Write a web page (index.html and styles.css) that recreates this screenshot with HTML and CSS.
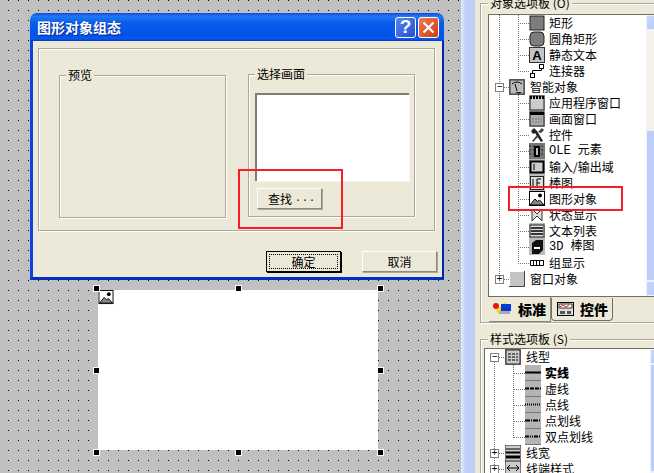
FILE: index.html
```html
<!DOCTYPE html>
<html lang="zh-CN">
<head>
    <meta charset="UTF-8">
    <title>图形对象组态</title>
    <link rel="stylesheet" href="styles.css">
</head>
<body>
<svg class="defs" width="0" height="0">
    <symbol id="i-pic" viewBox="0 0 16 16">
        <rect x="0.5" y="0.5" width="15" height="14" fill="#fff" stroke="#000"/>
        <circle cx="11" cy="4.5" r="2" fill="#000"/>
        <path d="M1 14 L6 8 L8.5 10.5 L10.5 9 L15 14 Z" fill="#888" stroke="#000" stroke-width="1"/>
    </symbol>
    <symbol id="i-line" viewBox="0 0 16 16">
        <rect width="16" height="15" fill="#b4b4b4"/>
        <rect y="15" width="16" height="1" fill="#777"/>
    </symbol>
</svg>

<div class="app">
    <!-- 画面区 -->
    <div class="canvas">
        <div class="dialog">
            <div class="titlebar">
                <span class="title">图形对象组态</span>
                <span class="capbtn help">?</span>
                <span class="capbtn close">
                    <svg width="13" height="13" viewBox="0 0 13 13"><path d="M1.5 1.5 L11.5 11.5 M11.5 1.5 L1.5 11.5" stroke="#fff" stroke-width="2.2"/></svg>
                </span>
            </div>
            <div class="client">
                <div class="group">
                    <div class="fs fs-preview">
                        <span class="fs-label">预览</span>
                    </div>
                    <div class="fs fs-select">
                        <span class="fs-label">选择画面</span>
                        <div class="listbox"></div>
                        <div class="btn btn-find"><span>查找</span><span class="dots">...</span></div>
                    </div>
                </div>
                <div class="footer">
                    <div class="btn btn-ok"><span class="focus">确定</span></div>
                    <div class="btn btn-cancel">取消</div>
                </div>
            </div>
        </div>

        <div class="picture">
            <svg class="pic-icon" width="16" height="15"><use href="#i-pic"/></svg>
        </div>
        <i class="handle h-tl"></i><i class="handle h-tm"></i><i class="handle h-tr"></i>
        <i class="handle h-ml"></i><i class="handle h-mr"></i>
        <i class="handle h-bl"></i><i class="handle h-bm"></i><i class="handle h-br"></i>
    </div>

    <div class="vbar"></div>

    <!-- 选项板 -->
    <div class="panel">
        <div class="pane pane-objects">
            <span class="pane-label">对象选项板 (O)</span>
            <div class="tree tree-objects">
                <div class="tree-body">
                    <div class="branch">
                        <div class="row"><svg class="ico" viewBox="0 0 16 16"><rect x="1" y="1" width="14" height="14" fill="#7d7d7d" stroke="#222"/></svg><span>矩形</span></div>
                        <div class="row"><svg class="ico" viewBox="0 0 16 16"><rect x="1" y="1" width="14" height="14" rx="4" fill="#7d7d7d" stroke="#222"/></svg><span>圆角矩形</span></div>
                        <div class="row"><svg class="ico" viewBox="0 0 16 16"><rect x="0.5" y="0.5" width="15" height="15" fill="#c4c4c4" stroke="#333"/><text x="8" y="13" text-anchor="middle" class="ico-a">A</text></svg><span>静态文本</span></div>
                        <div class="row"><svg class="ico" viewBox="0 0 16 16"><rect x="1.5" y="10.5" width="4" height="4" fill="#fff" stroke="#000"/><rect x="10.5" y="1.5" width="4" height="4" fill="#fff" stroke="#000"/><path d="M3.5 10 V7.5 H12.5 V6" fill="none" stroke="#000"/></svg><span>连接器</span></div>
                    </div>
                    <div class="row parent"><i class="exp">−</i><svg class="ico" viewBox="0 0 16 16"><rect width="16" height="16" fill="#777"/><rect x="1" y="1" width="14" height="14" fill="#bbb" stroke="#333"/><path d="M3 5 Q8 1 13 5 M8 12 L6 5" fill="none" stroke="#000"/><path d="M6 13 H13 L10 15Z" fill="#222"/></svg><span>智能对象</span></div>
                    <div class="branch">
                        <div class="row"><svg class="ico" viewBox="0 0 16 16"><rect width="16" height="16" fill="#bbb"/><rect x="1" y="1" width="14" height="14" fill="#ccc" stroke="#222"/><path d="M1 2.5 H15" stroke="#000" stroke-width="3" stroke-dasharray="2 1"/></svg><span>应用程序窗口</span></div>
                        <div class="row"><svg class="ico" viewBox="0 0 16 16"><rect width="16" height="16" fill="#bbb"/><rect x="1" y="1" width="14" height="14" fill="#aaa" stroke="#222"/><path d="M1 2.5 H15" stroke="#000" stroke-width="3"/><path d="M3 8 H13 M3 11 H13" stroke="#777" stroke-dasharray="2 1"/></svg><span>画面窗口</span></div>
                        <div class="row"><svg class="ico" viewBox="0 0 16 16"><path d="M2 4 L5 1 L8 4 L14 14 L12 15 L6 6 L4 7Z" fill="#222"/><path d="M9 5 L13 1 L15 3 L12 6 M3 14 L8 8 L9 10 L4 15Z" fill="#444"/></svg><span>控件</span></div>
                        <div class="row"><svg class="ico" viewBox="0 0 16 16"><rect width="16" height="16" fill="#777"/><path d="M0 3 H16 M0 7 H16 M0 11 H16" stroke="#222" stroke-dasharray="2 2"/><rect x="5" y="3" width="6" height="11" fill="#000"/><rect x="7" y="5" width="2" height="7" fill="#bbb"/></svg><span class="latin">OLE 元素</span></div>
                        <div class="row"><svg class="ico" viewBox="0 0 16 16"><rect width="16" height="16" fill="#bbb"/><rect x="1.5" y="2.5" width="13" height="11" fill="#ccc" stroke="#000" stroke-width="2"/><path d="M5 5 V11" stroke="#000"/></svg><span>输入/输出域</span></div>
                        <div class="row"><svg class="ico" viewBox="0 0 16 16"><rect width="16" height="16" fill="#bbb"/><rect x="1.5" y="1.5" width="13" height="13" fill="#ddd" stroke="#222"/><path d="M8 4 V12 M8 4 H12 M8 8 H11 M4 4 V12" stroke="#000" fill="none"/></svg><span>棒图</span></div>
                        <div class="row"><svg class="ico"><use href="#i-pic"/></svg><span>图形对象</span></div>
                        <div class="row"><svg class="ico" viewBox="0 0 16 16"><path d="M3 2 L8 7 L13 2 V14 L8 9 L3 14Z" fill="#ddd" stroke="#333"/></svg><span>状态显示</span></div>
                        <div class="row"><svg class="ico" viewBox="0 0 16 16"><rect width="16" height="16" fill="#bbb"/><rect x="1" y="2" width="14" height="12" fill="#ddd" stroke="#222"/><path d="M2 5 H14 M2 8 H14 M2 11 H14" stroke="#000" stroke-width="1.4"/></svg><span>文本列表</span></div>
                        <div class="row"><svg class="ico" viewBox="0 0 16 16"><rect width="16" height="16" fill="#bbb"/><path d="M3 4 L7 1 H14 V11 L10 15 H3Z" fill="#111"/><path d="M5 9 H11" stroke="#fff" stroke-width="2"/></svg><span class="latin">3D 棒图</span></div>
                        <div class="row"><svg class="ico" viewBox="0 0 16 16"><path d="M1.5 5.5 H14.5 V10.5 H1.5Z M4.5 5.5 V10.5 M7.5 5.5 V10.5 M10.5 5.5 V10.5" fill="#fff" stroke="#000"/></svg><span>组显示</span></div>
                    </div>
                    <div class="row parent"><i class="exp">+</i><svg class="ico" viewBox="0 0 16 16"><rect x="0" y="0" width="16" height="16" fill="#c4c4c4"/><path d="M0 15.5 H15.5 V0" fill="none" stroke="#444"/><path d="M0.5 15 V0.5 H15" fill="none" stroke="#fff"/></svg><span>窗口对象</span></div>
                </div>
                <div class="tree-scroll">
                    <div class="sbtn"></div>
                    <div class="strack"></div>
                    <div class="sthumb"></div>
                    <div class="sbtn"></div>
                </div>
            </div>
            <div class="tabs">
                <div class="tab tab-on">
                    <svg width="20" height="16" viewBox="0 0 20 16"><circle cx="4" cy="5" r="3" fill="#f01010"/><path d="M5 11 L14 2" stroke="#f0e000" stroke-width="3"/><rect x="9" y="3" width="10" height="7" fill="#0838d8"/><rect x="7" y="10" width="11" height="3" fill="#aaa"/></svg>
                    <b>标准</b>
                </div>
                <div class="tab">
                    <svg width="17" height="16" viewBox="0 0 17 16"><rect x="0.5" y="1.5" width="16" height="13" fill="#ddd" stroke="#000"/><path d="M2 3 H15 V7 H2Z" fill="#fff" stroke="#333"/><path d="M3 6 L6 4 L9 6 L12 4" fill="none" stroke="#e02020"/><path d="M3 10 H8 V13 H3Z M10 10 H14 V13 H10Z" fill="#555"/></svg>
                    <b>控件</b>
                </div>
            </div>
        </div>

        <div class="pane pane-styles">
            <span class="pane-label">样式选项板 (S)</span>
            <div class="tree tree-styles">
                <div class="tree-body">
                    <div class="row parent"><i class="exp">−</i><svg class="ico" viewBox="0 0 16 16"><rect width="16" height="16" fill="#888"/><rect x="1" y="1" width="14" height="14" fill="#ccc" stroke="#222"/><path d="M3 5 H13 M3 8 H13 M3 11 H13" stroke="#000" stroke-dasharray="3 1"/></svg><span>线型</span></div>
                    <div class="branch">
                        <div class="row"><svg class="ico"><use href="#i-line"/><path d="M0 7.5 H16" stroke="#000" stroke-width="2"/></svg><b>实线</b></div>
                        <div class="row"><svg class="ico"><use href="#i-line"/><path d="M0 7.5 H16" stroke="#000" stroke-width="2" stroke-dasharray="4 1"/></svg><span>虚线</span></div>
                        <div class="row"><svg class="ico"><use href="#i-line"/><path d="M0 7.5 H16" stroke="#000" stroke-width="2" stroke-dasharray="1 1"/></svg><span>点线</span></div>
                        <div class="row"><svg class="ico"><use href="#i-line"/><path d="M0 7.5 H16" stroke="#000" stroke-width="2" stroke-dasharray="5 1 1 1"/></svg><span>点划线</span></div>
                        <div class="row"><svg class="ico"><use href="#i-line"/><path d="M0 7.5 H16" stroke="#000" stroke-width="2" stroke-dasharray="4 1 1 1 1 1"/></svg><span>双点划线</span></div>
                    </div>
                    <div class="row parent"><i class="exp">+</i><svg class="ico" viewBox="0 0 16 16"><rect width="16" height="16" fill="#ccc" stroke="#222"/><path d="M1 4 H15" stroke="#000"/><path d="M1 7.5 H15" stroke="#000" stroke-width="2"/><path d="M1 12 H15" stroke="#000" stroke-width="3"/></svg><span>线宽</span></div>
                    <div class="row parent"><i class="exp">+</i><svg class="ico" viewBox="0 0 16 16"><rect width="16" height="16" fill="#ccc" stroke="#222"/><path d="M2 7 H14 M2 7 L5 4 M2 7 L5 10 M14 7 L11 4 M14 7 L11 10" fill="none" stroke="#000"/></svg><span>线端样式</span></div>
                </div>
                <div class="tree-scroll">
                    <div class="sbtn"></div>
                    <div class="sthumb"></div>
                    <div class="sbtn"></div>
                </div>
            </div>
        </div>
    </div>

    <!-- 红色标注框 -->
    <div class="mark mark-find"></div>
    <div class="mark mark-tree"></div>
</div>
</body>
</html>
```

FILE: styles.css
```css
html, body {
    margin: 0;
    padding: 0;
    overflow: hidden;
}
body {
    font-family: "Noto Sans CJK SC", "Liberation Sans", sans-serif;
    font-size: 12px;
    line-height: 16px;
    color: #000;
    background-color: #c0c0c0;
}
.defs {
    position: absolute;
}
.app {
    position: relative;
    display: flex;
    width: 654px;
    height: 473px;
    overflow: hidden;
}

/* canvas with 10px dot grid */
.canvas {
    position: relative;
    flex: none;
    width: 461px;
    height: 473px;
    background-color: #000;
    background-image:
        linear-gradient(to right, transparent 1px, #c0c0c0 1px),
        linear-gradient(to bottom, transparent 1px, #c0c0c0 1px);
    background-size: 10px 10px;
    background-position: 8px 0;
}
.picture {
    position: absolute;
    left: 98px;
    top: 290px;
    width: 280px;
    height: 160px;
    background-color: #fff;
}
.pic-icon {
    display: block;
}
.handle {
    position: absolute;
    width: 5px;
    height: 5px;
    margin: -3px 0 0 -3px;
    background-color: #000;
    border: 1px solid #fff;
}
.h-tl { left: 96px; top: 288px; }
.h-tm { left: 238px; top: 288px; }
.h-tr { left: 380px; top: 288px; }
.h-ml { left: 96px; top: 370px; }
.h-mr { left: 380px; top: 370px; }
.h-bl { left: 96px; top: 452px; }
.h-bm { left: 238px; top: 452px; }
.h-br { left: 380px; top: 452px; }

/* dialog */
.dialog {
    position: absolute;
    left: 30px;
    top: 13px;
    width: 414px;
    height: 267px;
    display: flex;
    flex-direction: column;
}
.titlebar {
    flex: none;
    display: flex;
    align-items: center;
    height: 28px;
    padding: 0 5px 0 7px;
    border-radius: 7px 7px 0 0;
    background: linear-gradient(to bottom, #0a4fd8 0, #1f78f4 12%, #0a5cec 35%, #0053e6 80%, #0a58ee 92%, #0038c8 100%);
}
.title {
    flex: 1;
    color: #fff;
    font-size: 14px;
    font-weight: bold;
    text-shadow: 1px 1px #0a2a90;
}
.capbtn {
    display: flex;
    align-items: center;
    justify-content: center;
    width: 19px;
    height: 19px;
    margin-left: 2px;
    border: 1px solid #fff;
    border-radius: 3px;
    color: #fff;
    font-family: "Liberation Sans", sans-serif;
    font-size: 19px;
    font-weight: bold;
}
.help {
    background: linear-gradient(135deg, #5a86ea, #1c50d8);
}
.close {
    background: linear-gradient(135deg, #ee7a56, #d03c14);
}
.client {
    flex: 1;
    display: flex;
    flex-direction: column;
    padding: 7px 7px 0 5px;
    background-color: #ece9d8;
    border: solid #0a44dc;
    border-width: 0 2px 3px 3px;
    border-right-color: #0024b8;
    border-bottom-color: #0030c0;
}
.group {
    box-sizing: border-box;
    flex: none;
    display: flex;
    align-items: flex-start;
    gap: 22px;
    height: 183px;
    padding: 26px 0 0 20px;
    border: 1px solid #aca899;
    box-shadow: 1px 1px #fff, inset 1px 1px #fff;
}
.fs {
    position: relative;
    box-sizing: border-box;
    width: 167px;
    height: 143px;
    border: 1px solid #aca899;
    box-shadow: 1px 1px #fff, inset 1px 1px #fff;
}
.fs-select {
    margin-top: -1px;
    padding: 18px 0 0 6px;
}
.fs-label {
    position: absolute;
    left: 6px;
    top: -9px;
    padding: 0 2px;
    background-color: #ece9d8;
}
.listbox {
    box-sizing: border-box;
    width: 154px;
    height: 88px;
    background-color: #fff;
    border: solid #7f7c73;
    border-width: 2px 0 0 2px;
    box-shadow: 1px 1px #f6f4ea;
}
.btn {
    box-sizing: border-box;
    display: flex;
    align-items: center;
    justify-content: center;
    height: 21px;
    background-color: #ece9d8;
    border: 1px solid;
    border-color: #fff #8c897e #8c897e #fff;
    box-shadow: 1px 1px #aca899;
    white-space: nowrap;
}
.btn-find {
    width: 65px;
    margin: 7px 0 0 2px;
    justify-content: flex-start;
    padding-left: 10px;
}
.dots {
    margin-left: 3px;
    letter-spacing: 1px;
    font-family: "Liberation Mono", monospace;
    font-size: 10px;
}
.footer {
    display: flex;
    justify-content: flex-end;
    gap: 21px;
    margin: 20px -2px 0 0;
}
.btn-ok {
    width: 75px;
    padding: 2px;
    border: 1px solid #000;
    box-shadow: 1px 1px #000;
}
.focus {
    flex: 1;
    box-sizing: border-box;
    height: 100%;
    text-align: center;
    line-height: 13px;
    border: 1px dotted #000;
}
.btn-cancel {
    width: 75px;
}

/* scrollbar strip between canvas and panel */
.vbar {
    flex: none;
    width: 14px;
    background: linear-gradient(to right, #e4ecfe, #c0d0f8 30%, #bccdf8);
    border-right: 1px solid #eef2ff;
    margin-right: -1px;
}

/* option panels */
.panel {
    flex: none;
    width: 179px;
    padding: 3px 0 0 5px;
    background-color: #ece9d8;
}
.pane {
    position: relative;
    box-sizing: border-box;
    width: 190px;
    border: 1px solid #aca899;
    box-shadow: 1px 1px #fff, inset 1px 1px #fff;
}
.pane-objects {
    height: 320px;
    padding: 10px 0 0 7px;
}
.pane-styles {
    height: 150px;
    margin-top: 16px;
    padding: 8px 0 0 3px;
}
.pane-label {
    position: absolute;
    left: 7px;
    top: -9px;
    padding: 0 2px;
    background-color: #ece9d8;
}
.tree {
    position: relative;
    display: flex;
    box-sizing: border-box;
    background-color: #fff;
    border: solid #716f64;
    border-width: 1px 0 1px 1px;
}
.tree-objects {
    width: 182px;
    height: 283px;
}
.tree-styles {
    height: 140px;
}
.tree-body {
    position: relative;
    box-sizing: border-box;
    flex: none;
    overflow: hidden;
}
.tree-objects .tree-body {
    width: 157px;
    padding-left: 6px;
}
.tree-styles .tree-body {
    width: 165px;
    padding-left: 5px;
}

/* dotted tree lines */
.tree-body::before {
    content: "";
    position: absolute;
    top: 0;
    height: 263px;
    border-left: 1px dotted #777;
}
.tree-objects .tree-body::before {
    left: 10px;
}
.tree-styles .tree-body::before {
    left: 9px;
    top: 8px;
    height: 120px;
}
.branch {
    position: relative;
    margin-left: 23px;
}
.branch::before {
    content: "";
    position: absolute;
    left: 0;
    top: 0;
    bottom: 7px;
    border-left: 1px dotted #777;
}
.branch .row {
    padding-left: 11px;
}
.branch .row::before {
    content: "";
    position: absolute;
    left: 0;
    top: 8px;
    width: 11px;
    border-top: 1px dotted #777;
}
.row {
    position: relative;
    display: flex;
    align-items: center;
    height: 16px;
    white-space: nowrap;
}
.ico {
    flex: none;
    width: 16px;
    height: 16px;
    margin-right: 4px;
}
.parent .ico {
    margin-right: 5px;
}
.ico-a {
    font-family: "Liberation Sans", sans-serif;
    font-size: 13px;
    font-weight: bold;
}
.latin {
    font-family: "Liberation Mono", "Noto Sans CJK SC", monospace;
}
.exp {
    position: relative;
    flex: none;
    box-sizing: border-box;
    width: 9px;
    height: 9px;
    margin-right: 5px;
    border: 1px solid #808080;
    background-color: #fff;
    font-family: "Liberation Mono", monospace;
    font-size: 10px;
    font-style: normal;
    line-height: 7px;
    text-align: center;
}
.exp::after {
    content: "";
    position: absolute;
    left: 8px;
    top: 3px;
    width: 5px;
    border-top: 1px dotted #777;
}
.tree-styles .exp {
    margin-right: 6px;
}
.tree-styles .branch .row {
    padding-left: 12px;
}
.tree-styles .branch .row::before {
    width: 12px;
}
.tree-styles b {
    font-weight: 900;
}

/* tree scrollbars, cut off by the window edge */
.tree-scroll {
    flex: none;
    display: flex;
    flex-direction: column;
    width: 16px;
    height: 100%;
    background-color: #f4f2ea;
}
.sbtn {
    flex: none;
    height: 15px;
    background: linear-gradient(135deg, #c8d6fa, #b4c8f8);
    border: 1px solid #eef2ff;
    box-sizing: border-box;
}
.strack {
    flex: none;
    height: 100px;
}
.sthumb {
    flex: 1;
    background-color: #bccdf8;
    border: 1px solid #eef2ff;
    box-sizing: border-box;
}

/* tabs */
.tabs {
    display: flex;
    align-items: flex-start;
    margin-left: 1px;
    height: 26px;
}
.tab {
    box-sizing: border-box;
    display: flex;
    align-items: center;
    gap: 6px;
    width: 62px;
    height: 23px;
    margin-top: 1px;
    padding-left: 5px;
    background-color: #ece9d8;
    border: 1px solid #716f64;
    border-top: 0;
    border-radius: 0 0 4px 4px;
    font-size: 14px;
}
.tab b {
    font-weight: 900;
}
.tab-on {
    gap: 6px;
    height: 26px;
    margin-top: -1px;
    padding-left: 3px;
    border-left: 0;
    border-right: 1px solid #8c897e;
    border-bottom: 1px solid #8c897e;
    border-radius: 0;
}

/* red annotation boxes */
.mark {
    position: absolute;
    box-sizing: border-box;
    border: 2px solid #f81c24;
}
.mark-find {
    left: 238px;
    top: 169px;
    width: 105px;
    height: 60px;
}
.mark-tree {
    left: 508px;
    top: 186px;
    width: 115px;
    height: 25px;
}
```
